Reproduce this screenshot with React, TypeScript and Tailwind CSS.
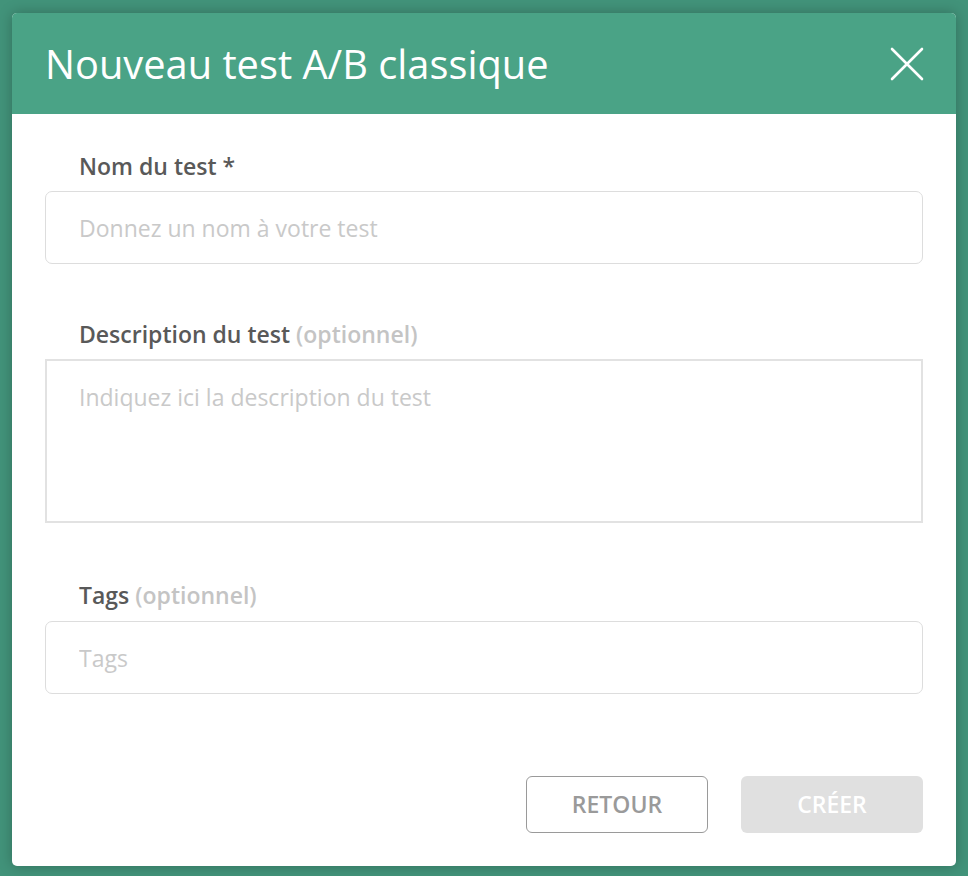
const font = { fontFamily: '"Open Sans", "Noto Sans", sans-serif' };

export default function App() {
  return (
    <div
      className="w-[968px] h-[876px] bg-[#42937a] pt-[13px] pl-[12px] overflow-hidden"
      style={font}
    >
      <div className="w-[944px] h-[853px] bg-white rounded-[5px] overflow-hidden shadow-[0_0_14px_rgba(0,0,0,0.25)] flex flex-col">
        {/* Header */}
        <div className="h-[101px] bg-[#4aa386] flex items-center justify-between pl-[33px] pr-[32px]">
          <h1 className="text-white text-[39.8px] font-normal leading-none">
            Nouveau test A/B classique
          </h1>
          <button aria-label="Fermer" className="w-[34px] h-[34px] flex items-center justify-center">
            <svg width="34" height="34" viewBox="0 0 34 34" fill="none">
              <path d="M2 2 L32 32 M32 2 L2 32" stroke="white" strokeWidth="2.6" strokeLinecap="round" />
            </svg>
          </button>
        </div>

        {/* Body */}
        <div className="flex-1 flex flex-col px-[33px] pt-[37px] pb-[33px]">
          <label className="pl-[34px] text-[23px] leading-[30px] font-semibold text-[#595959]">
            Nom du test *
          </label>
          <input
            className="mt-[10px] h-[73px] w-full border border-[#ddd] rounded-[7px] px-[33px] text-[23px] outline-none placeholder:text-[#c9c9c9]"
            placeholder="Donnez un nom à votre test"
          />

          <label className="mt-[55px] pl-[34px] text-[23px] leading-[30px] font-semibold text-[#595959]">
            Description du test <span className="text-[#c4c4c4]">(optionnel)</span>
          </label>
          <textarea
            className="mt-[10px] h-[164px] w-full border-2 border-[#e2e2e2] px-[32px] pt-[20px] text-[23px] leading-[32px] outline-none resize-none placeholder:text-[#c9c9c9]"
            placeholder="Indiquez ici la description du test"
          />

          <label className="mt-[57px] pl-[34px] text-[23px] leading-[30px] font-semibold text-[#595959]">
            Tags <span className="text-[#c4c4c4]">(optionnel)</span>
          </label>
          <input
            className="mt-[11px] h-[73px] w-full border border-[#ddd] rounded-[7px] px-[33px] text-[23px] outline-none placeholder:text-[#c9c9c9]"
            placeholder="Tags"
          />

          <div className="mt-auto flex justify-end gap-[33px]">
            <button className="w-[182px] h-[57px] border-[1.5px] border-[#9a9a9a] rounded-[6px] text-[23px] font-semibold text-[#9a9a9a]">
              RETOUR
            </button>
            <button className="w-[182px] h-[57px] bg-[#e0e0e0] rounded-[6px] text-[23px] font-semibold text-white">
              CRÉER
            </button>
          </div>
        </div>
      </div>
    </div>
  );
}
